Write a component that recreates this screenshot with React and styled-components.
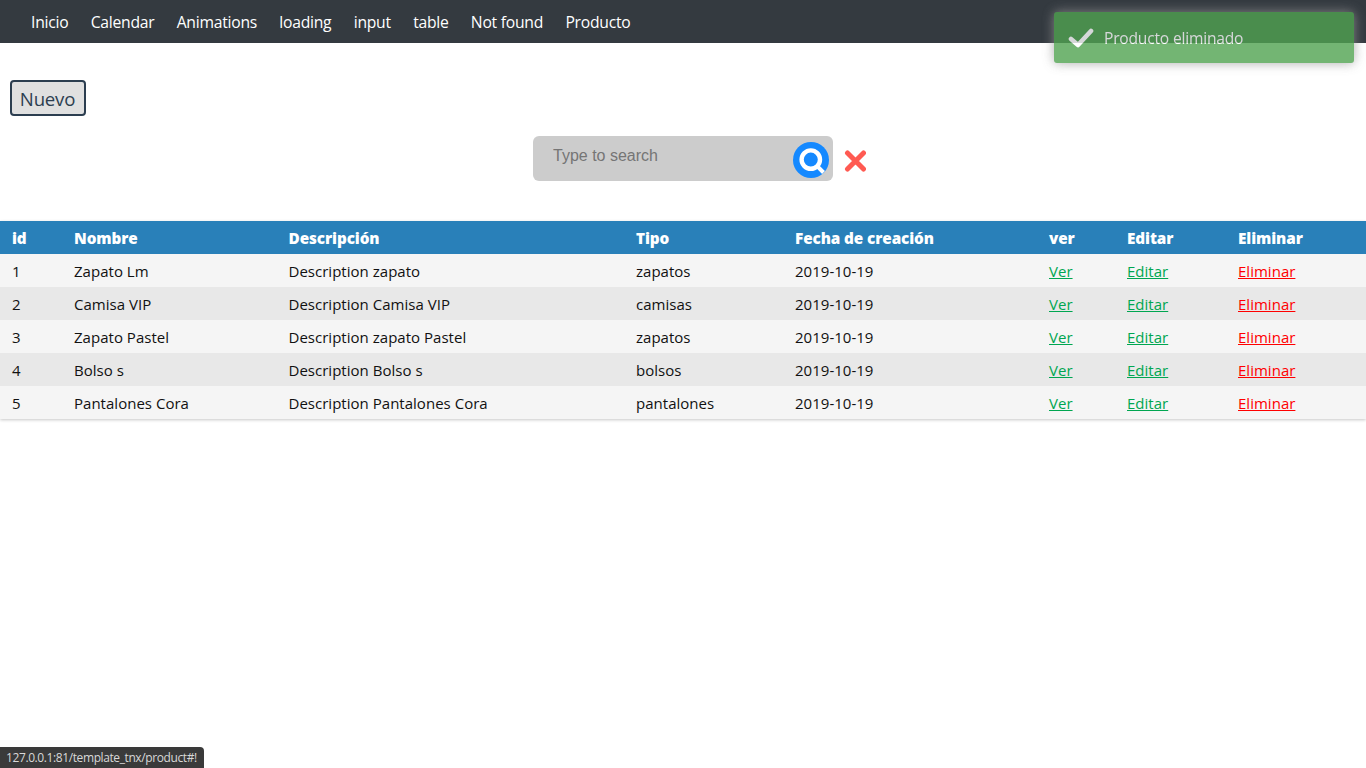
import React from "react";
import styled, { createGlobalStyle } from "styled-components";

const Global = createGlobalStyle`
  html, body { margin: 0; padding: 0; background: #fff; }
  body { font-family: "Open Sans", "Noto Sans", sans-serif; font-size: 15px; color: #111; }
  * { box-sizing: border-box; }
`;

const Page = styled.div`
  min-height: 768px;
  display: flex;
  flex-direction: column;
`;

const Navbar = styled.nav`
  height: 43px;
  background: #343a40;
  display: flex;
  align-items: center;
  gap: 22.3px;
  padding: 2px 0 0 31px;
`;

const NavLink = styled.a`
  color: #fff;
  font-size: 15.7px;
  letter-spacing: -0.25px;
  text-decoration: none;
  line-height: 1;
  white-space: nowrap;
`;

const Actions = styled.div`
  padding: 37px 10px 20px;
  display: flex;
`;

const NewButton = styled.button`
  width: 76px;
  height: 36px;
  border: 2px solid #2c3e50;
  border-radius: 4px;
  background: #e0e0e0;
  color: #2c3e50;
  font-family: inherit;
  font-size: 18.6px;
  letter-spacing: -0.2px;
  padding: 0 1px 0 0;
`;

const SearchRow = styled.div`
  display: flex;
  justify-content: center;
  align-items: center;
  gap: 11px;
  padding-left: 33px;
  height: 45px;
`;

const SearchBox = styled.div`
  width: 300px;
  height: 45px;
  background: #ccc;
  border-radius: 6px;
  display: flex;
  align-items: flex-start;
  padding: 10px 4px 0 20px;
`;

const SearchInput = styled.input`
  flex: 1;
  min-width: 0;
  height: 20px;
  border: 0;
  padding: 0;
  background: transparent;
  font-family: "Liberation Sans", Arial, sans-serif;
  font-size: 16px;
  outline: none;
  &::placeholder { color: #757575; opacity: 1; }
`;

const SearchIconWrap = styled.span`
  width: 36px;
  height: 36px;
  margin-top: -4px;
  flex: none;
  display: block;
`;

const CloseWrap = styled.span`
  width: 22px;
  height: 22px;
  margin-top: 5px;
  display: block;
`;

const Table = styled.table`
  width: 1366px;
  margin-top: 40px;
  border-collapse: collapse;
  table-layout: fixed;
  box-shadow: 0 1px 3px rgba(0, 0, 0, 0.22);
`;

const Th = styled.th`
  height: 33px;
  padding: 0 0 0 12px;
  background: #2980b9;
  color: #fff;
  text-align: left;
  font-size: 15.3px;
  font-weight: 800;
  letter-spacing: -0.1px;
`;

const Row = styled.tr`
  background: ${(p) => (p.$even ? "#e8e8e8" : "#f5f5f5")};
`;

const Td = styled.td`
  height: 33px;
  padding: 0 0 0 12px;
  font-size: 15px;
  letter-spacing: 0.02px;
  color: #111;
  white-space: nowrap;
`;

const RowLink = styled.a`
  color: ${(p) => p.$color};
  text-decoration: underline;
`;

const Toast = styled.div`
  position: fixed;
  top: 12px;
  right: 12px;
  width: 300px;
  height: 51px;
  border-radius: 3px;
  background: #51a351;
  opacity: 0.8;
  color: #fff;
  box-shadow: 0 0 12px #999;
  display: flex;
  align-items: flex-start;
  padding: 15px 0 0 14px;
  gap: 10px;
  font-size: 15.6px;
  letter-spacing: -0.2px;
  line-height: 22px;
`;

const StatusBar = styled.div`
  position: fixed;
  left: 0;
  bottom: 0;
  height: 21px;
  width: 204px;
  padding: 1px 0 0 6px;
  background: #3a3a3a;
  color: #d8d8d8;
  border-top-right-radius: 4px;
  font-size: 12px;
  letter-spacing: -0.4px;
  line-height: 20px;
  white-space: nowrap;
`;

const links = ["Inicio", "Calendar", "Animations", "loading", "input", "table", "Not found", "Producto"];
const widths = [62, 214.5, 347.5, 159, 254, 78, 111, 140];
const heads = ["id", "Nombre", "Descripción", "Tipo", "Fecha de creación", "ver", "Editar", "Eliminar"];
const rows = [
  [1, "Zapato Lm", "Description zapato", "zapatos"],
  [2, "Camisa VIP", "Description Camisa VIP", "camisas"],
  [3, "Zapato Pastel", "Description zapato Pastel", "zapatos"],
  [4, "Bolso s", "Description Bolso s", "bolsos"],
  [5, "Pantalones Cora", "Description Pantalones Cora", "pantalones"],
];

export default function App() {
  return (
    <Page>
      <Global />
      <Navbar>
        {links.map((l) => (
          <NavLink href="#" key={l}>{l}</NavLink>
        ))}
      </Navbar>
      <Actions>
        <NewButton>Nuevo</NewButton>
      </Actions>
      <SearchRow>
        <SearchBox>
          <SearchInput placeholder="Type to search" />
          <SearchIconWrap>
            <svg width="36" height="36" viewBox="0 0 36 36">
              <circle cx="18" cy="18" r="18" fill="#1589ff" />
              <circle cx="17.8" cy="17.6" r="9.2" fill="none" stroke="#fff" strokeWidth="4.4" />
              <path d="M24.2 24.2 L30.5 30.5" stroke="#fff" strokeWidth="4" />
            </svg>
          </SearchIconWrap>
        </SearchBox>
        <CloseWrap>
          <svg width="22" height="22" viewBox="0 0 22 22">
            <path d="M3.5 3 L19.5 19 M19.5 3 L3.5 19" stroke="#ff5a52" strokeWidth="5" strokeLinecap="round" />
          </svg>
        </CloseWrap>
      </SearchRow>
      <Table>
        <colgroup>
          {widths.map((w, i) => (
            <col key={i} style={{ width: w }} />
          ))}
        </colgroup>
        <thead>
          <tr>
            {heads.map((h) => (
              <Th key={h}>{h}</Th>
            ))}
          </tr>
        </thead>
        <tbody>
          {rows.map((r, i) => (
            <Row key={r[0]} $even={i % 2 === 1}>
              {r.map((c, j) => (
                <Td key={j}>{c}</Td>
              ))}
              <Td>2019-10-19</Td>
              <Td><RowLink href="#" $color="#00a651">Ver</RowLink></Td>
              <Td><RowLink href="#" $color="#00a651">Editar</RowLink></Td>
              <Td><RowLink href="#" $color="#ff0000">Eliminar</RowLink></Td>
            </Row>
          ))}
        </tbody>
      </Table>
      <Toast>
        <svg width="26" height="20" viewBox="0 0 26 20" style={{ marginTop: 1 }}>
          <path d="M3 11 L10 17 L23 3" fill="none" stroke="#fff" strokeWidth="4.6" strokeLinecap="round" strokeLinejoin="round" />
        </svg>
        <span>Producto eliminado</span>
      </Toast>
      <StatusBar>127.0.0.1:81/template_tnx/product#!</StatusBar>
    </Page>
  );
}
